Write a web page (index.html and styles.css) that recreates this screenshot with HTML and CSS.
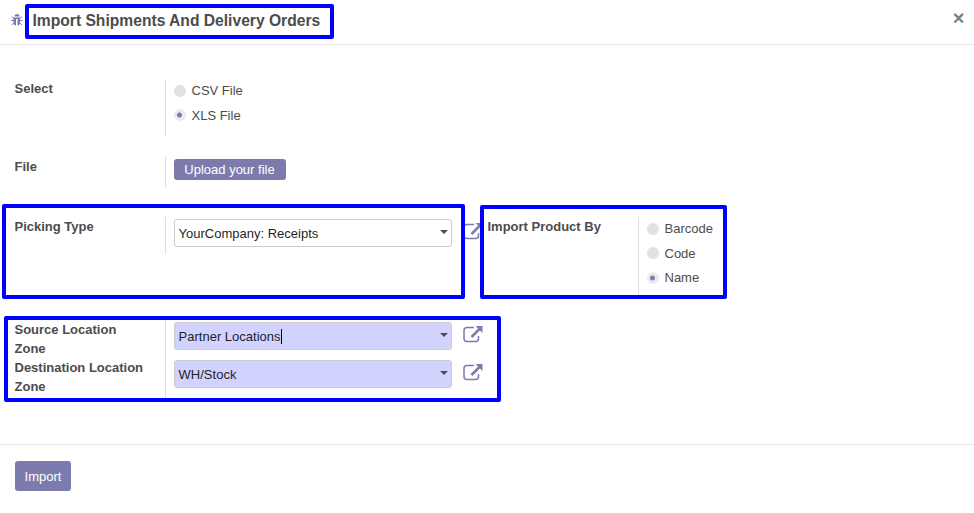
FILE: index.html
```html
<!DOCTYPE html>
<html lang="en">
<head>
<meta charset="utf-8">
<title>Import Shipments And Delivery Orders</title>
<link rel="stylesheet" href="styles.css">
</head>
<body>
<svg width="0" height="0" class="defs" aria-hidden="true">
  <symbol id="external" viewBox="0 0 20 18">
    <path d="M11 2.500H4Q1 2.500 1 5.500v8Q1 16.500 4 16.500h8.500Q15.500 16.500 15.500 13.500V11" fill="none" stroke="currentColor" stroke-width="1.500"/>
    <path d="M8.500 12 17 3.500" fill="none" stroke="currentColor" stroke-width="2.500"/>
    <path d="M12.500 1h7v7z" fill="currentColor"/>
  </symbol>
</svg>
<div class="modal">
  <header class="modal-header">
    <svg class="bug" viewBox="0 0 12 12">
      <path d="M3.500 2.500a2.500 2.500 0 0 1 5 0z" fill="currentColor"/>
      <path d="M2.500 3.500h6.500v5Q9 11.500 6.500 11.500V5H5v6.500Q2.500 11.500 2.500 8.500z" fill="currentColor"/>
      <path d="M.8 2.600 3 4.500M11 2.600 8.800 4.500M0 6.500H3M9 6.500h2.500M.8 11 3 8.700M11 11 8.700 8.700" stroke="currentColor" fill="none"/>
    </svg>
    <h1 class="title">Import Shipments And Delivery Orders</h1>
    <button class="close" aria-label="Close">×</button>
  </header>

  <main class="modal-body">
    <div class="row row-select">
      <div class="label">Select</div>
      <div class="field radios">
        <label class="radio"><i class="dot"></i>CSV File</label>
        <label class="radio"><i class="dot checked"></i>XLS File</label>
      </div>
    </div>
    <div class="row row-file">
      <div class="label">File</div>
      <div class="field"><button class="btn upload">Upload your file</button></div>
    </div>
    <div class="columns">
      <div class="row row-picking">
        <div class="label">Picking Type</div>
        <div class="field many2one">
          <div class="input">YourCompany: Receipts<i class="caret"></i></div>
          <svg class="external"><use href="#external"/></svg>
        </div>
      </div>
      <div class="row row-product">
        <div class="label">Import Product By</div>
        <div class="field radios">
          <label class="radio"><i class="dot"></i>Barcode</label>
          <label class="radio"><i class="dot"></i>Code</label>
          <label class="radio"><i class="dot checked"></i>Name</label>
        </div>
      </div>
    </div>
    <div class="locations">
      <div class="row">
        <div class="label">Source Location<br>Zone</div>
        <div class="field many2one">
          <div class="input required">Partner Locations<span class="cursor"></span><i class="caret"></i></div>
          <svg class="external"><use href="#external"/></svg>
        </div>
      </div>
      <div class="row">
        <div class="label">Destination Location<br>Zone</div>
        <div class="field many2one">
          <div class="input required">WH/Stock<i class="caret"></i></div>
          <svg class="external"><use href="#external"/></svg>
        </div>
      </div>
    </div>
  </main>

  <footer class="modal-footer"><button class="btn import">Import</button></footer>

  <div class="mark mark-title"></div>
  <div class="mark mark-picking"></div>
  <div class="mark mark-product"></div>
  <div class="mark mark-locations"></div>
</div>
</body>
</html>
```
FILE: styles.css
```css
* { box-sizing: border-box; }
body {
  margin: 0;
  background: #fff;
  color: #4c4c4c;
  font: 13px/19px "Liberation Sans", Arial, sans-serif;
  overflow: hidden;
}
.defs { position: absolute; }
button { font: inherit; border: 0; padding: 0; }
.modal { position: relative; height: 513px; display: flex; flex-direction: column; }

.modal-header {
  height: 45px;
  padding: 0 9.500px 4px 11px;
  display: flex;
  align-items: center;
  border-bottom: 1px solid #e5e5e5;
}
.bug { width: 12px; height: 12px; margin-right: 9.500px; color: #7c7bad; }
.title { margin: 1px 0 0; font-size: 15.630px; line-height: 24px; font-weight: bold; }
.close {
  margin: -5px 0 0 auto;
  background: none;
  color: #7f7f7f;
  font-size: 20px;
  line-height: 20px;
  font-weight: bold;
}

.modal-body { height: 399px; padding: 34px 0 0 14.500px; }
.row { display: grid; grid-template-columns: 150.500px 330px; }
.label { font-weight: bold; white-space: nowrap; }
.field { border-left: 1px solid #ddd; padding-left: 8px; }
.row-select { height: 58px; margin-bottom: 20px; }
.row-file { height: 30px; margin-bottom: 30px; }
.columns { display: flex; align-items: flex-start; height: 103px; }
.row-picking { height: 37px; width: 473px; }
.row-product { height: 82px; grid-template-columns: 150.500px 100px; }
.locations .row { height: 38px; }
.locations .row:last-child { height: 40px; }

.radio { display: flex; align-items: center; height: 24px; line-height: 18px; }
.radio + .radio { height: 26px; }
.radio + .radio + .radio { height: 22px; }
.dot { width: 12px; height: 12px; margin-right: 5.500px; border-radius: 50%; background: #dee2e6; }
.radio + .radio .dot { margin-bottom: 2px; }
.radio + .radio + .radio .dot { margin-bottom: 0; }
.dot.checked { background: radial-gradient(circle at 5.500px 6px, #7c7bad 2px, #e9ecef 3px); }

.many2one { display: flex; padding-top: 2px; }
.input {
  display: flex;
  flex: none;
  align-items: center;
  width: 278px;
  height: 28px;
  padding: 1px 3px 0 3.600px;
  border: 1px solid #ccc;
  border-radius: 3px;
  color: #1f1f1f;
}
.input.required { background: #d2d2ff; }
.caret {
  margin: -4px 0 0 auto;
  border: 4px solid transparent;
  border-top-color: #4c4c4c;
  border-bottom: 0;
}
.cursor { width: 1px; height: 15px; background: #000; }
.external { flex: none; width: 20px; height: 18px; margin: 3px 0 0 11px; color: #7c7bad; }

.btn { background: #7c7bad; color: #fff; border-radius: 3px; }
.upload { display: block; width: 112px; height: 21px; margin-top: 2px; padding-right: 1px; line-height: 21px; }
.modal-footer { border-top: 1px solid #e5e5e5; padding: 16px 15px; }
.import { display: block; width: 56px; height: 30px; }

/* Highlight frames laid over the form */
.mark { position: absolute; border: 4px solid #00f; border-radius: 2px; }
.mark-title { left: 25px; top: 4px; width: 309px; height: 35px; }
.mark-picking { left: 2px; top: 204px; width: 463px; height: 95px; }
.mark-product { left: 480px; top: 205px; width: 247px; height: 94px; }
.mark-locations { left: 4px; top: 316px; width: 497px; height: 86px; }
```
